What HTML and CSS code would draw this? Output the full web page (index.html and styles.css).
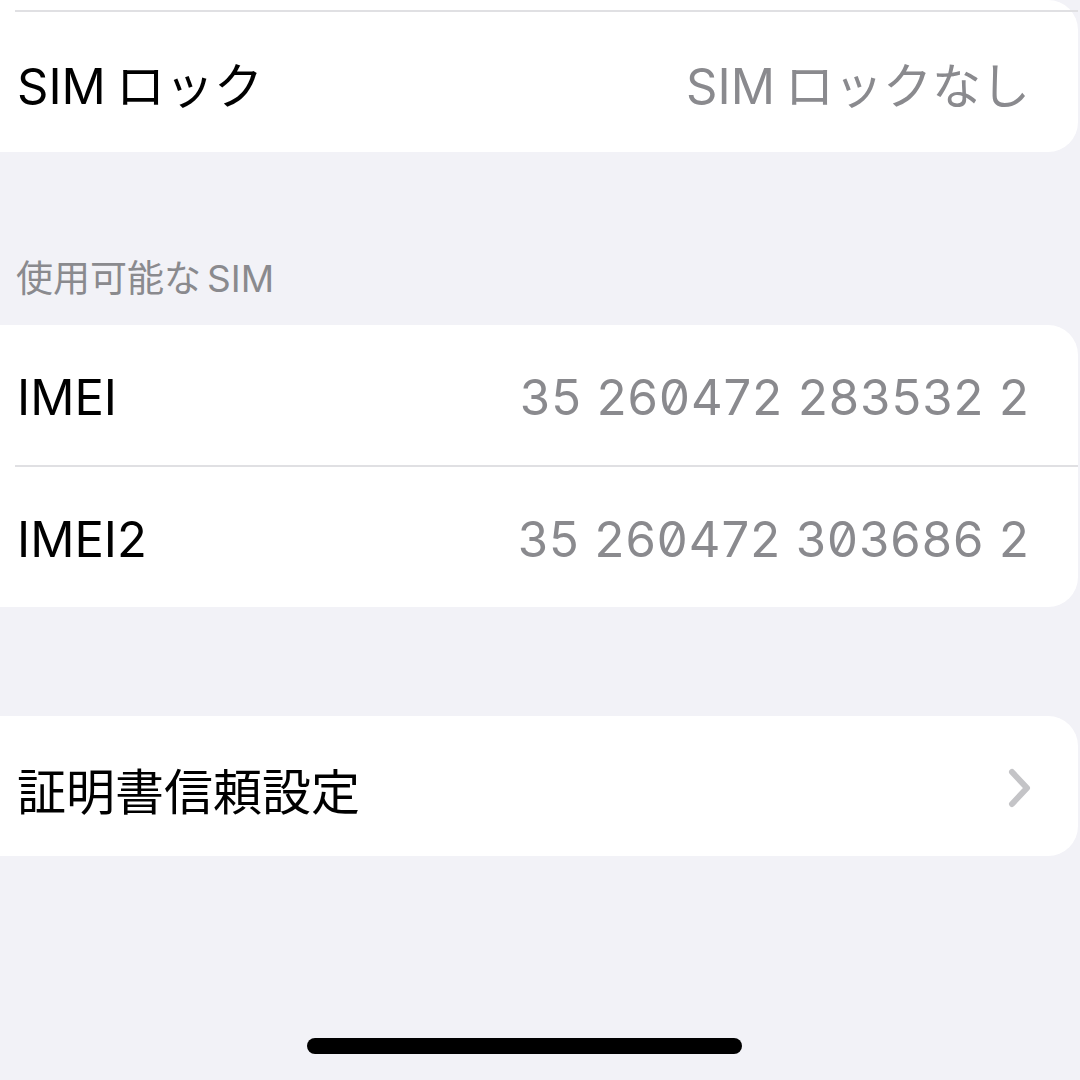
FILE: index.html
```html
<!DOCTYPE html>
<html lang="ja">
<head>
<meta charset="utf-8">
<link rel="stylesheet" href="styles.css">
</head>
<body>
<div class="screen">
  <section class="card card-top">
    <div class="stub"></div>
    <div class="sep"></div>
    <div class="row row-top">
      <span class="label"><span class="latin">SIM</span>ロック</span>
      <span class="value"><span class="latin">SIM</span>ロックなし</span>
    </div>
  </section>

  <div class="section-header">使用可能な<span class="latin-before">SIM</span></div>

  <section class="card">
    <div class="row">
      <span class="label">IMEI</span>
      <span class="value num">35 260472 283532 2</span>
    </div>
    <div class="sep"></div>
    <div class="row">
      <span class="label">IMEI2</span>
      <span class="value num">35 260472 303686 2</span>
    </div>
  </section>

  <section class="card card-trust">
    <div class="row">
      <span class="label">証明書信頼設定</span>
      <svg class="chevron" width="24" height="40" viewBox="0 0 24 40" aria-hidden="true">
        <path d="M4 4 L19 20 L4 36" fill="none" stroke="#c4c4c7" stroke-width="6" stroke-linecap="round" stroke-linejoin="round"/>
      </svg>
    </div>
  </section>

  <div class="spacer"></div>
  <div class="home-indicator"></div>
</div>
</body>
</html>
```

FILE: styles.css
```css
* {
  box-sizing: border-box;
}

html, body {
  margin: 0;
  padding: 0;
  background: #f2f2f7;
}

.screen {
  width: 1080px;
  height: 1080px;
  overflow: hidden;
  display: flex;
  flex-direction: column;
  font-family: Inter, "Noto Sans CJK JP", sans-serif;
  -webkit-font-smoothing: antialiased;
}

.card {
  width: 1078px;
  background: #ffffff;
  border-radius: 0 30px 30px 0;
  flex: none;
}

.stub {
  height: 10px;
}

.sep {
  height: 2px;
  margin-left: 15px;
  background: #e0e0e3;
}

.row {
  height: 140px;
  display: flex;
  align-items: center;
  justify-content: space-between;
  padding: 4px 48px 0 17px;
}

.row-top {
  padding-top: 0;
}

.label {
  font-size: 49px;
  color: #000000;
  white-space: nowrap;
}

.value {
  font-size: 49px;
  color: #8a8a8e;
  white-space: nowrap;
}

.latin {
  margin-right: 10px;
}

.latin-before {
  margin-left: 6px;
}

.num {
  font-feature-settings: "zero" 1;
  letter-spacing: 1px;
}

.section-header {
  height: 173px;
  padding: 97px 0 0 16px;
  font-size: 37px;
  color: #8a8a8e;
  white-space: nowrap;
}

.card-trust {
  margin-top: 109px;
}

.chevron {
  display: block;
  margin-right: -2px;
}

.spacer {
  height: 182px;
  flex: none;
}

.home-indicator {
  width: 435px;
  height: 16px;
  margin-left: 307px;
  border-radius: 8px;
  background: #000000;
  flex: none;
}
```
